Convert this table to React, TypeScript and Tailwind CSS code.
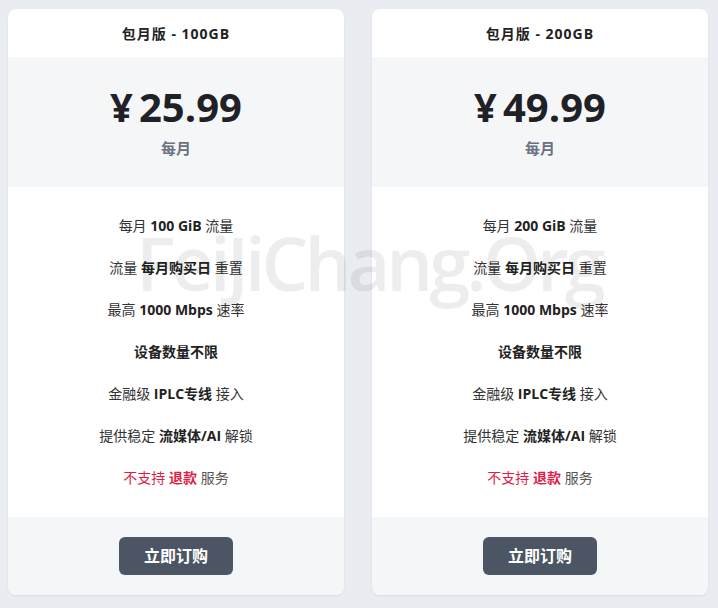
import React from "react";

type Feat = React.ReactNode;

const font = { fontFamily: '"Open Sans", "Noto Sans CJK SC", sans-serif' };

function Card({ title, price, feats }: { title: string; price: string; feats: Feat[] }) {
  return (
    <div className="w-[336px] rounded-lg overflow-hidden bg-white shadow-[0_1px_2px_rgba(0,0,0,0.08)]">
      <div className="h-[48px] flex items-center justify-center text-[14px] font-bold text-[#222] tracking-[1px]">
        {title}
      </div>
      <div className="h-[130px] bg-[#f5f6f8] flex flex-col items-center justify-center">
        <div className="flex items-baseline text-[#1f2127] font-bold text-[40px] leading-none mt-[2px]">
          <span className="mr-[6px]">¥</span>
          <span>{price}</span>
        </div>
        <div className="text-[15px] font-semibold text-[#6b7280] mt-[10px]">每月</div>
      </div>
      <div className="pt-[17px] pb-[19px] flex flex-col">
        {feats.map((f, i) => (
          <div key={i} className="h-[42px] flex items-center justify-center text-[14px] text-[#333]">
            {f}
          </div>
        ))}
      </div>
      <div className="h-[78px] bg-[#f5f6f8] flex items-center justify-center">
        <button className="w-[114px] h-[38px] rounded-md bg-[#4b5563] text-white font-bold text-[16px]">
          立即订购
        </button>
      </div>
    </div>
  );
}

function feats(gb: string): Feat[] {
  return [
    <span>每月 <b className="text-[#222]">{gb} GiB</b> 流量</span>,
    <span>流量 <b className="text-[#222]">每月购买日</b> 重置</span>,
    <span>最高 <b className="text-[#222]">1000 Mbps</b> 速率</span>,
    <span><b className="text-[#222]">设备数量不限</b></span>,
    <span>金融级 <b className="text-[#222]">IPLC专线</b> 接入</span>,
    <span>提供稳定 <b className="text-[#222]">流媒体/AI</b> 解锁</span>,
    <span>
      <span className="text-[#e11d48]">不支持 </span>
      <b className="text-[#e11d48]">退款</b>
      <span className="text-[#555]"> 服务</span>
    </span>,
  ];
}

export default function App() {
  return (
    <div className="relative w-[718px] h-[608px] bg-[#e9ecf1] overflow-hidden" style={font}>
      <div className="flex gap-[28px] pl-[8px] pt-[9px]">
        <Card title="包月版 - 100GB" price="25.99" feats={feats("100")} />
        <Card title="包月版 - 200GB" price="49.99" feats={feats("200")} />
      </div>
      <div className="absolute left-[136px] top-[226px] pointer-events-none text-[74px] font-semibold text-[rgba(0,0,0,0.07)] leading-none tracking-[-4px] whitespace-nowrap">
        FeiJiChang.Org
      </div>
    </div>
  );
}
